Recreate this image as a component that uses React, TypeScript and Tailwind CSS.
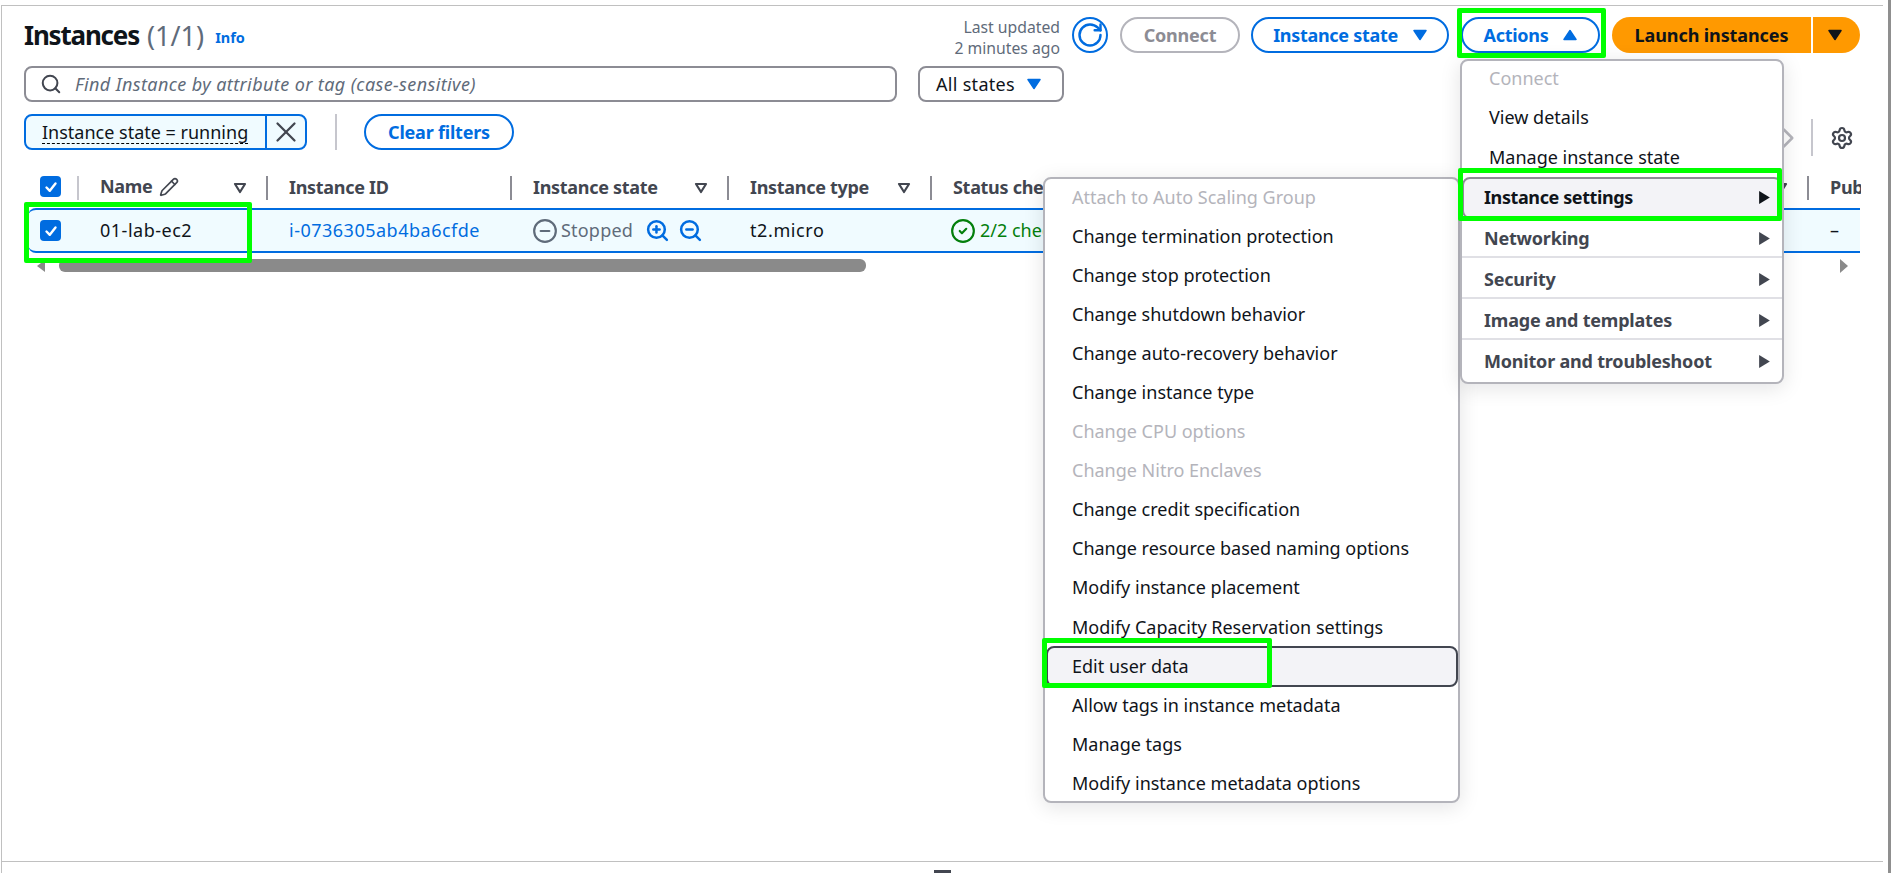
import { Search, X, Pencil, RotateCw, ZoomIn, ZoomOut, CircleMinus, CircleCheck, ChevronRight, Settings } from 'lucide-react';

const tableCols = 'grid grid-cols-[53px_189px_244px_217px_203px_877px_54px]';
const rowCols = 'grid grid-cols-[49px_189px_244px_217px_203px_877px_54px]';

function Caret({ up, className }: { up?: boolean; className: string }) {
    return (
        <svg viewBox="0 0 14 12" className={`w-[14px] h-[12px] shrink-0 ${className}`}>
            <polygon
                points={up ? '7,1.5 13,10.5 1,10.5' : '1,1.5 13,1.5 7,10.5'}
                fill="currentColor"
                stroke="currentColor"
                strokeWidth="1.5"
                strokeLinejoin="round"
            />
        </svg>
    );
}

function FilterCaret() {
    return (
        <svg viewBox="0 0 14 12" className="w-[14px] h-[12px] shrink-0 text-[#424650]">
            <polygon points="2,2 12,2 7,10" fill="none" stroke="currentColor" strokeWidth="2.2" strokeLinejoin="round" />
        </svg>
    );
}

function Checkbox() {
    return (
        <div className="w-[21px] h-[21px] rounded-[4px] bg-[#006ce0] flex items-center justify-center">
            <svg viewBox="0 0 14 14" className="w-[14px] h-[14px]">
                <path d="M2.5 7.5 L5.8 10.8 L11.5 3.5" fill="none" stroke="white" strokeWidth="2.4" strokeLinecap="round" strokeLinejoin="round" />
            </svg>
        </div>
    );
}

function HeaderCell({ label, caret, dark = true, children }: { label: string; caret?: boolean; dark?: boolean; children?: React.ReactNode }) {
    return (
        <div className={`h-6 border-l-2 pl-[21px] pr-[19px] flex items-center overflow-hidden ${dark ? 'border-[#8c8c94]' : 'border-[#c6c6cd]'}`}>
            <span className={`font-bold leading-[20px] tracking-[-0.3px] text-[#424650] whitespace-nowrap ${dark ? '-mt-[2px]' : '-mt-[4px]'}`}>{label}</span>
            {children}
            {caret && <div className="ml-auto"><FilterCaret /></div>}
        </div>
    );
}

function GreenBox({ className }: { className: string }) {
    return <div className={`absolute z-30 border-[5px] border-[#00ff00] rounded-[2px] pointer-events-none ${className}`} />;
}

const submenuItems = [
    { label: 'Attach to Auto Scaling Group', disabled: true },
    { label: 'Change termination protection' },
    { label: 'Change stop protection' },
    { label: 'Change shutdown behavior' },
    { label: 'Change auto-recovery behavior' },
    { label: 'Change instance type' },
    { label: 'Change CPU options', disabled: true },
    { label: 'Change Nitro Enclaves', disabled: true },
    { label: 'Change credit specification' },
    { label: 'Change resource based naming options' },
    { label: 'Modify instance placement' },
    { label: 'Modify Capacity Reservation settings' },
    { label: 'Edit user data', active: true },
    { label: 'Allow tags in instance metadata' },
    { label: 'Manage tags' },
    { label: 'Modify instance metadata options' },
];

const actionGroups = ['Networking', 'Security', 'Image and templates', 'Monitor and troubleshoot'];

export default function App() {
    return (
        <div className="relative flex h-[873px] overflow-hidden bg-white text-[18px] text-[#0f141a] font-['Noto_Sans',sans-serif]">
            <div className="flex-1 min-w-0 mr-[5px]">
                <div className="mt-[5px] ml-px h-[856px] border-t border-l border-[#c0c0c0] pl-[22px] pr-[23px] pt-[11px]">
                    {/* title row */}
                    <div className="flex items-center h-9">
                        <h1 className="text-[26px] font-bold tracking-[-1.2px] leading-none">Instances</h1>
                        <span className="ml-[8px] text-[27px] leading-none text-[#5f6b7a]">(1/1)</span>
                        <span className="ml-[11px] mt-[6px] text-[14.5px] font-bold text-[#006ce0]">Info</span>
                        <div className="ml-auto flex items-center">
                            <div className="mt-[6px] text-[15.75px] leading-[21px] text-right text-[#5f6b7a]">
                                <div>Last updated</div>
                                <div>2 minutes ago</div>
                            </div>
                            <button className="ml-3 w-9 h-9 rounded-full border-2 border-[#006ce0] flex items-center justify-center text-[#006ce0]">
                                <RotateCw size={28} strokeWidth={2.1} />
                            </button>
                            <button className="ml-3 w-[120px] h-9 rounded-full border-2 border-[#b4b4bb] font-bold tracking-[-0.2px] text-[#8c8c94]">Connect</button>
                            <button className="ml-[11px] w-[198px] h-9 rounded-full border-2 border-[#006ce0] font-bold tracking-[-0.3px] text-[#006ce0] flex items-center justify-center gap-[15px]">
                                Instance state
                                <Caret className="text-[#006ce0]" />
                            </button>
                            <button className="ml-3 w-[139px] h-9 rounded-full border-2 border-[#006ce0] font-bold tracking-[-0.3px] text-[#006ce0] flex items-center justify-center gap-[15px]">
                                Actions
                                <Caret up className="text-[#006ce0]" />
                            </button>
                            <div className="ml-3 flex h-9">
                                <button className="w-[199px] rounded-l-full bg-[#ff9900] font-bold tracking-[-0.1px]">Launch instances</button>
                                <button className="ml-[2px] w-[47px] rounded-r-full bg-[#ff9900] flex items-center justify-center pr-1">
                                    <Caret className="text-[#0f141a]" />
                                </button>
                            </div>
                        </div>
                    </div>

                    {/* search row */}
                    <div className="mt-[13px] flex h-9 gap-[21px]">
                        <div className="w-[873px] border-2 border-[#8c8c94] rounded-lg flex items-center pl-[14px] gap-[13px]">
                            <Search size={22} strokeWidth={2.2} className="text-[#424650]" />
                            <span className="italic tracking-[0.4px] text-[#5f6b7a]">Find Instance by attribute or tag (case-sensitive)</span>
                        </div>
                        <div className="w-[146px] border-2 border-[#8c8c94] rounded-lg flex items-center pl-4 gap-[12px]">
                            <span className="tracking-[0.3px]">All states</span>
                            <Caret className="text-[#006ce0]" />
                        </div>
                    </div>

                    {/* filter row */}
                    <div className="mt-3 flex h-9">
                        <div className="w-[283px] flex border-2 border-[#006ce0] rounded-lg bg-[#f0fbff]">
                            <div className="w-[241px] border-r-2 border-[#006ce0] pl-4 flex items-center">
                                <span className="leading-[22px] border-b border-dashed border-black whitespace-nowrap">Instance state = running</span>
                            </div>
                            <div className="flex-1 flex items-center justify-center text-[#424650]">
                                <X size={34} strokeWidth={1.6} />
                            </div>
                        </div>
                        <div className="ml-[28px] w-[2px] bg-[#c6c6cd]" />
                        <button className="ml-[27px] w-[150px] rounded-full border-2 border-[#006ce0] font-bold tracking-[-0.2px] text-[#006ce0]">Clear filters</button>
                        <div className="ml-auto mt-[5px] h-[37px] flex items-center">
                            <ChevronRight size={34} strokeWidth={1.8} className="text-[#b4b4bb]" />
                            <div className="ml-[6px] w-[2px] h-[37px] bg-[#c6c6cd]" />
                            <Settings size={24} strokeWidth={2.2} className="ml-[17px] mr-[6px] text-[#424650]" />
                        </div>
                    </div>

                    {/* table */}
                    <div className={`mt-[26px] ${tableCols}`}>
                        <div className="pl-4"><Checkbox /></div>
                        <HeaderCell label="Name" caret dark={false}>
                            <Pencil size={20} strokeWidth={2} className="ml-[6px] -mt-[2px] text-[#424650]" />
                        </HeaderCell>
                        <HeaderCell label="Instance ID" />
                        <HeaderCell label="Instance state" caret />
                        <HeaderCell label="Instance type" caret />
                        <HeaderCell label="Status check" caret />
                        <HeaderCell label="Public" />
                    </div>
                    <div className={`mt-2 ml-1 h-[45px] rounded-l-lg border-y-2 border-[#006ce0] bg-[#f0fbff] items-center ${rowCols}`}>
                        <div className="pl-3"><Checkbox /></div>
                        <div className="pl-[23px] tracking-[0.5px]">01-lab-ec2</div>
                        <div className="pl-[23px] tracking-[0.5px] text-[#006ce0]">i-0736305ab4ba6cfde</div>
                        <div className="pl-[22px] flex items-center text-[#5f6b7a]">
                            <CircleMinus size={26} strokeWidth={2} className="text-[#5f6b7a]" />
                            <span className="ml-[3px] tracking-[0.2px]">Stopped</span>
                            <ZoomIn size={25} strokeWidth={2.4} className="ml-[12px] text-[#006ce0]" />
                            <ZoomOut size={25} strokeWidth={2.4} className="ml-[8px] text-[#006ce0]" />
                        </div>
                        <div className="pl-[23px] tracking-[0.6px]">t2.micro</div>
                        <div className="pl-[20px] flex items-center text-[#037f0c]">
                            <CircleCheck size={26} strokeWidth={2} />
                            <span className="ml-[4px]">2/2 checks passed</span>
                        </div>
                        <div className="pl-[23px]">–</div>
                    </div>

                    {/* scrollbar */}
                    <div className="mt-[6px] flex items-center h-[13px] pl-[13px] pr-[12px]">
                        <div className="w-0 h-0 border-y-[6px] border-y-transparent border-r-[8px] border-r-[#8a8a8a]" />
                        <div className="ml-[14px] w-[807px] h-[13px] rounded-md bg-[#8a8a8a]" />
                        <div className="ml-auto w-0 h-0 border-y-[7px] border-y-transparent border-l-[8px] border-l-[#8a8a8a]" />
                    </div>
                </div>

                {/* resize bar */}
                <div className="ml-px h-3 border-t border-l border-[#c0c0c0] flex justify-center items-end">
                    <div className="w-[17px] h-[3px] bg-[#424650]" />
                </div>
            </div>

            {/* window edge */}
            <div className="w-[3px] bg-[#8f8f8f]" />

            {/* instance settings submenu */}
            <div className="absolute z-10 left-[1043px] top-[177px] w-[417px] h-[626px] rounded-lg border-2 border-[#b4b4bb] bg-white shadow-[0_4px_20px_1px_rgba(0,7,22,0.1)]">
                <div className="-mt-[2px]">
                    {submenuItems.map((item) => (
                        <div
                            key={item.label}
                            className={
                                item.active
                                    ? 'h-[41px] -mb-[2px] ml-px rounded-lg border-2 border-[#424650] bg-[#f3f3f7] pl-[24px] flex items-center relative'
                                    : `h-[39.1px] pt-px pl-[27px] flex items-center ${item.disabled ? 'text-[#b4b4bb]' : ''}`
                            }
                        >
                            {item.label}
                        </div>
                    ))}
                </div>
            </div>

            {/* actions menu */}
            <div className="absolute z-20 left-[1460px] top-[59px] w-[324px] h-[325px] rounded-lg border-2 border-[#b4b4bb] bg-white shadow-[0_4px_20px_1px_rgba(0,7,22,0.1)]">
                <div className="-mt-[2px]">
                    <div className="h-[39.3px] pl-[27px] flex items-center text-[#b4b4bb]">Connect</div>
                    <div className="h-[39.3px] pl-[27px] flex items-center">View details</div>
                    <div className="h-[39.3px] pl-[27px] flex items-center">Manage instance state</div>
                    <div className="h-[42px] -mb-[2px] rounded-lg border-2 border-[#8c8c94] bg-[#f3f3f7] pl-[20px] pr-[9px] flex items-center justify-between font-bold tracking-[-0.4px]">
                        Instance settings
                        <svg viewBox="0 0 12 14" className="w-[13px] h-[15px]"><polygon points="1,1 11,7 1,13" fill="#0f141a" /></svg>
                    </div>
                    {actionGroups.map((group, i) => (
                        <div
                            key={group}
                            className={`h-[41px] pl-[22px] pr-[11px] flex items-center justify-between font-bold tracking-[-0.2px] text-[#424650] ${i < actionGroups.length - 1 ? 'pt-[4px] border-b-2 border-[#e0e0e5]' : 'pt-[2px]'}`}
                        >
                            {group}
                            <svg viewBox="0 0 12 14" className="w-[13px] h-[15px]"><polygon points="1,1 11,7 1,13" fill="#424650" /></svg>
                        </div>
                    ))}
                </div>
            </div>

            {/* green annotations */}
            <GreenBox className="left-[24px] top-[202px] w-[228px] h-[61px]" />
            <GreenBox className="left-[1457px] top-[8px] w-[149px] h-[50px]" />
            <GreenBox className="left-[1458px] top-[168px] w-[324px] h-[53px]" />
            <GreenBox className="left-[1042px] top-[638px] w-[230px] h-[50px]" />
        </div>
    );
}
